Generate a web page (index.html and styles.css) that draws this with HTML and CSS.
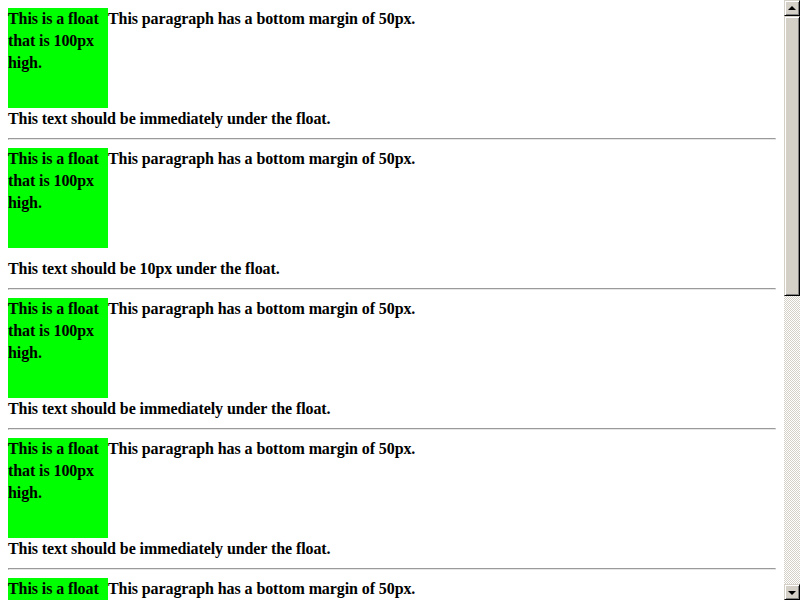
FILE: index.html
```html
<!DOCTYPE html>
<html>
<head>
<meta charset="utf-8">
<title>Float and clearance</title>
<link rel="stylesheet" href="styles.css">
</head>
<body>
<div class="window">
  <main class="page">
    <section class="test">
      <div class="float">This is a float that is 100px high.</div>
      <p class="para">This paragraph has a bottom margin of 50px.</p>
      <p class="after">This text should be immediately under the float.</p>
    </section>
    <hr class="rule">
    <section class="test">
      <div class="float">This is a float that is 100px high.</div>
      <p class="para">This paragraph has a bottom margin of 50px.</p>
      <p class="after gap">This text should be 10px under the float.</p>
    </section>
    <hr class="rule">
    <section class="test">
      <div class="float">This is a float that is 100px high.</div>
      <p class="para">This paragraph has a bottom margin of 50px.</p>
      <p class="after">This text should be immediately under the float.</p>
    </section>
    <hr class="rule">
    <section class="test">
      <div class="float">This is a float that is 100px high.</div>
      <p class="para">This paragraph has a bottom margin of 50px.</p>
      <p class="after">This text should be immediately under the float.</p>
    </section>
    <hr class="rule">
    <section class="test">
      <div class="float">This is a float that is 100px high.</div>
      <p class="para">This paragraph has a bottom margin of 50px.</p>
      <p class="after">This text should be immediately under the float.</p>
    </section>
    <hr class="rule">
  </main>
  <div class="scrollbar">
    <div class="sb-btn"><span class="arrow-up"></span></div>
    <div class="sb-track">
      <div class="sb-thumb"></div>
    </div>
    <div class="sb-btn"><span class="arrow-down"></span></div>
  </div>
</div>
</body>
</html>
```

FILE: styles.css
```css
html, body {
  margin: 0;
  height: 100%;
  overflow: hidden;
  background: #fff;
}

body {
  font-family: "Liberation Serif", "Times New Roman", serif;
  font-weight: bold;
  font-size: 16px;
  line-height: 22px;
  letter-spacing: -0.09px;
  color: #000;
}

.window {
  display: flex;
  height: 600px;
}

.page {
  flex: 1;
  min-width: 0;
  padding: 8px;
  overflow: hidden;
}

.test {
  margin: 0;
}

.float {
  float: left;
  width: 100px;
  height: 100px;
  background: #00ff00;
}

.para {
  margin: 0 0 50px;
}

.after {
  clear: left;
  margin: 0;
}

.after.gap {
  padding-top: 10px;
}

.rule {
  margin: 8px 0;
  height: 0;
  border: 1px solid;
  border-color: #9a9a9a #e6e6e6 #e6e6e6 #9a9a9a;
}

.scrollbar {
  width: 16px;
  flex: none;
  display: flex;
  flex-direction: column;
  height: 600px;
}

.sb-btn {
  box-sizing: border-box;
  width: 16px;
  height: 16px;
  flex: none;
  background: #d4d0c8;
  border: 1px solid;
  border-color: #d4d0c8 #000 #000 #d4d0c8;
  box-shadow: inset 1px 1px #fff, inset -1px -1px #808080;
  display: flex;
  align-items: center;
  justify-content: center;
}

.arrow-up {
  width: 0;
  height: 0;
  border-left: 4px solid transparent;
  border-right: 4px solid transparent;
  border-bottom: 4px solid #000;
  margin-top: -1px;
}

.arrow-down {
  width: 0;
  height: 0;
  border-left: 4px solid transparent;
  border-right: 4px solid transparent;
  border-top: 4px solid #000;
  margin-top: 1px;
}

.sb-track {
  flex: 1;
  background: repeating-conic-gradient(#ffffff 0 25%, #d4d0c8 0 50%) 0 0 / 2px 2px;
}

.sb-thumb {
  box-sizing: border-box;
  height: 280px;
  background: #d4d0c8;
  border: 1px solid;
  border-color: #d4d0c8 #000 #000 #d4d0c8;
  box-shadow: inset 1px 1px #fff, inset -1px -1px #808080;
}
```
